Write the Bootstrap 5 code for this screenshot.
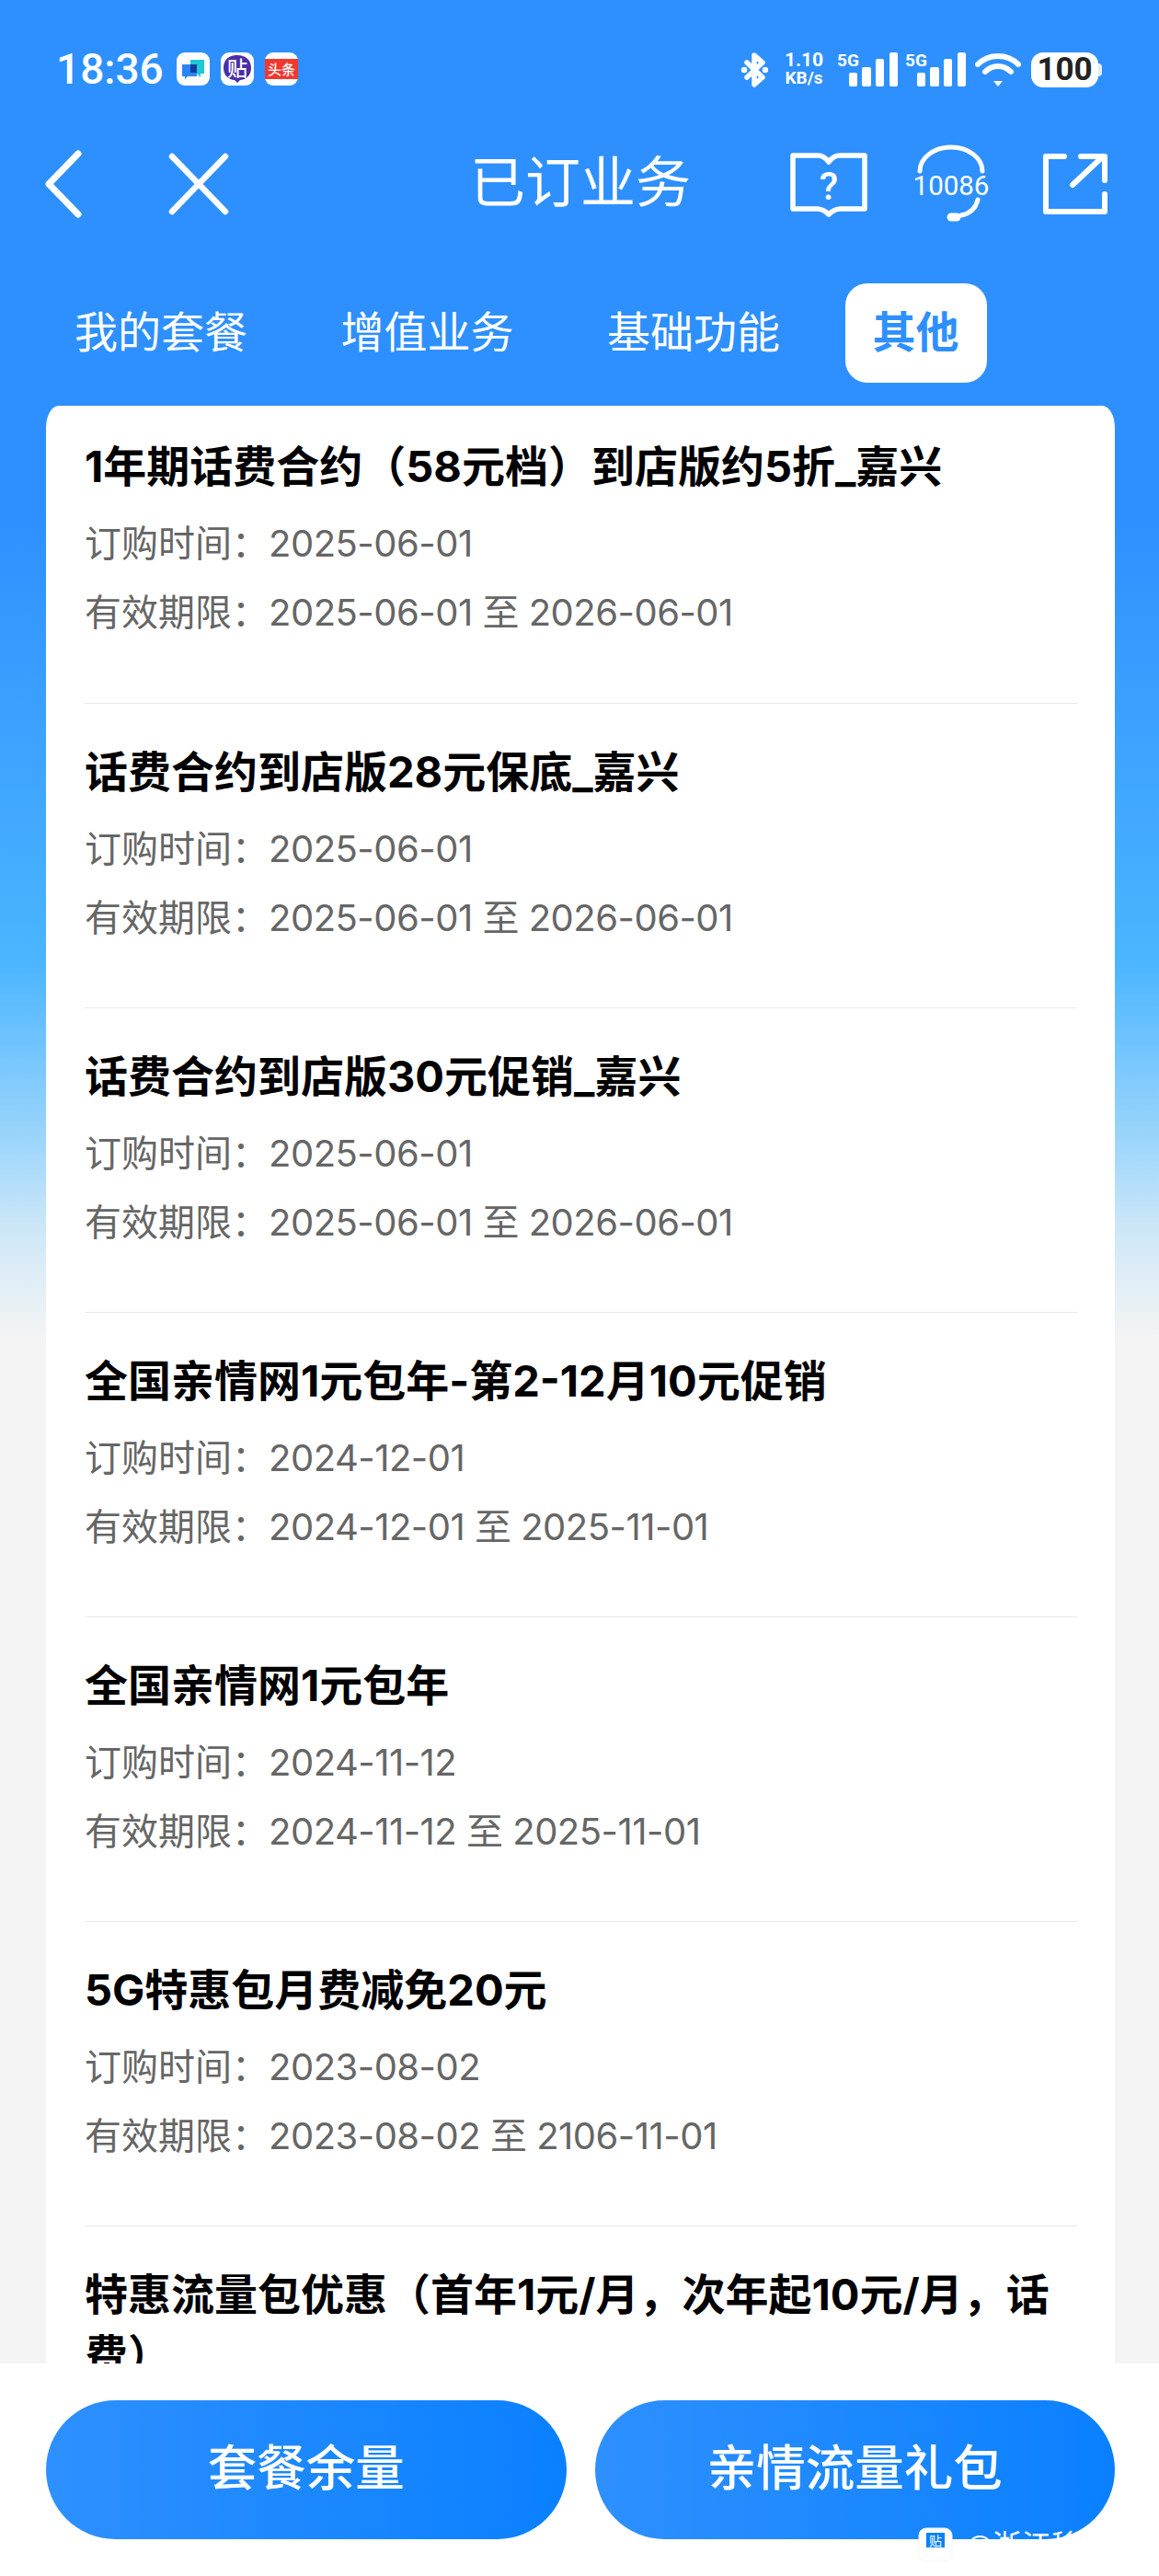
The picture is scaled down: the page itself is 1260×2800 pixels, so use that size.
<!DOCTYPE html>
<html lang="zh-CN">
<head>
  <meta charset="UTF-8" />
  <meta name="viewport" content="width=device-width, initial-scale=1" />
  <title>已订业务</title>
  <link href="https://cdn.jsdelivr.net/npm/bootstrap@5.3.0/dist/css/bootstrap.min.css" rel="stylesheet" />
  <style>
    html, body { height: 100%; margin: 0; }
    body { font-family: "Roboto", "Noto Sans CJK SC", sans-serif; background: #fff; }
    svg { display: block; flex: none; }
    svg text { font-family: "Roboto", "Noto Sans CJK SC", sans-serif; }
    .phone { height: 2800px; overflow: hidden; }
    .page-area {
      min-height: 0;
      overflow: hidden;
      background: linear-gradient(#2e90ff 0, #2e90ff 560px, #4bb5ff 1045px, #8fd0fc 1210px, #cfe8f8 1340px, #f4f4f4 1455px);
    }
    .status-row { padding: 56px 62px 0 61px; height: 145px; color: #fff; }
    .clock { font-size: 46px; font-weight: 500; line-height: 38px; width: 113px; margin-right: 18px; }
    .tile-row { gap: 12px; }
    .app-tile { width: 36px; height: 36px; border-radius: 9px; background: #fff; }
    .speed { width: 44px; margin: 0 14px 0 17px; font-weight: 700; text-align: center; }
    .speed-num { font-size: 21px; line-height: 19px; }
    .speed-unit { font-size: 19px; line-height: 20px; }
    .signal { height: 42px; margin-top: -4px; }
    .signal-two { margin-left: 8px; }
    .wifi { margin: 0 11px 0 10px; }
    .battery-body {
      width: 73px; height: 38px; border-radius: 13px; background: #fff; color: #222;
      font-size: 35px; font-weight: 700; line-height: 38px; text-align: center;
    }
    .battery-nub { width: 4px; height: 14px; border-radius: 0 4px 4px 0; background: #fff; opacity: .85; }
    .top-nav { height: 110px; padding: 0 47px 0 49px; display: grid; grid-template-columns: 1fr auto 1fr; }
    .close-icon { margin-left: 92px; }
    .nav-icons { gap: 53px; padding-right: 8px; }
    .headset-icon { margin-left: -6px; }
    .page-title { color: #fff; font-size: 60px; font-weight: 400; line-height: 80px; }
    .tab-row { margin-top: 53px; padding-left: 50px; gap: 39.5px; }
    .tab-row .nav-link {
      color: #fff; font-size: 47px; line-height: 108px; height: 108px; padding: 0 31px; border-radius: 24px; font-weight: 400;
    }
    .tab-row .nav-link.active { background: #fff; color: #2e90ff; font-weight: 700; padding: 0 30px; }
    .biz-card { margin: 25px 48px 0 50px; border: 0; border-radius: 14px 14px 0 0 / 24px 24px 0 0; padding: 0 41px 0 42px; }
    .biz-item { padding: 41px 0 60px; border-color: #e9e9e9; background: transparent; }
    .biz-item:first-child { padding: 33px 0 61px; }
    .biz-name { color: #000; font-family: "Inter", "Noto Sans CJK SC", sans-serif; font-size: 47px; font-weight: 700; line-height: 66px; margin-bottom: 13px; }
    .biz-meta { color: #666; font-family: "Inter", "Noto Sans CJK SC", sans-serif; font-size: 40px; line-height: 75px; font-weight: 400; }
    .biz-date { letter-spacing: -.5px; }
    .bottom-bar { height: 231px; padding: 40px 48px 40px 50px; gap: 31px; background: #fff; }
    .bar-btn {
      flex: 1 1 0; height: 151px; border: 0; border-radius: 76px; padding: 0;
      font-size: 53.5px; font-weight: 500; color: #fff;
      background: linear-gradient(90deg, #2e90ff, #0a80ff);
    }
    .bar-btn:hover, .bar-btn:active { color: #fff; background: linear-gradient(90deg, #2e90ff, #0a80ff); }
    .wm-mark { left: 998px; top: 178px; gap: 14px; color: #fff; font-size: 32px; line-height: 40px; }
  </style>
</head>
<body>
  <div class="phone d-flex flex-column">
    <div class="page-area flex-grow-1">

      <!-- status bar -->
      <div class="status-row d-flex justify-content-between align-items-start">
        <div class="d-flex align-items-center">
          <div class="clock text-nowrap">18:36</div>
          <div class="d-flex tile-row">
            <div class="app-tile">
              <svg width="36" height="36" viewBox="0 0 36 36">
                <path d="M15 8h15v15h-4v4l-4-4h-7z" fill="#1ec8d4"/>
                <path d="M6 13h16v13H12l-3 3v-3H6z" fill="#2a86f8"/>
                <rect x="15" y="13" width="7" height="9" fill="#0f3f9e"/>
              </svg>
            </div>
            <div class="app-tile">
              <svg width="36" height="36" viewBox="0 0 36 36">
                <path d="M18 3c9 0 15 5 15 14 0 8-6 13-12 13l-3 3-3-3C9 30 3 25 3 17 3 8 9 3 18 3z" fill="#4a2fa6"/>
                <text x="18" y="25" font-size="22" font-weight="500" fill="#fff" text-anchor="middle">贴</text>
              </svg>
            </div>
            <div class="app-tile">
              <svg width="36" height="36" viewBox="0 0 36 36">
                <rect x="0" y="7" width="36" height="22" fill="#f0382f"/>
                <text x="18" y="24" font-size="15" font-weight="500" fill="#fff" text-anchor="middle">头条</text>
              </svg>
            </div>
          </div>
        </div>
        <div class="d-flex align-items-center">
          <svg width="30" height="38" viewBox="0 0 30 38" fill="none" stroke="#fff" stroke-width="5.5" stroke-linecap="round" stroke-linejoin="round">
            <path d="M7 11l17 16-9 8V3l9 8L7 27"/>
            <circle cx="4" cy="19" r="2" fill="#fff" stroke-width="2.5"/>
            <circle cx="27" cy="19" r="2" fill="#fff" stroke-width="2.5"/>
          </svg>
          <div class="speed">
            <div class="speed-num">1.10</div>
            <div class="speed-unit">KB/s</div>
          </div>
          <svg class="signal" width="66" height="42" viewBox="0 -4 66 42" fill="#fff">
            <text x="0" y="15" font-size="19" font-weight="700">5G</text>
            <rect x="13" y="22" width="9" height="15" rx="2"/>
            <rect x="27" y="16" width="10" height="21" rx="2"/>
            <rect x="42" y="7" width="9" height="30" rx="2"/>
            <rect x="57" y="0" width="9" height="37" rx="2"/>
          </svg>
          <svg class="signal signal-two" width="66" height="42" viewBox="0 -4 66 42" fill="#fff">
            <text x="0" y="15" font-size="19" font-weight="700">5G</text>
            <rect x="13" y="22" width="9" height="15" rx="2"/>
            <rect x="27" y="16" width="10" height="21" rx="2"/>
            <rect x="42" y="7" width="9" height="30" rx="2"/>
            <rect x="57" y="0" width="9" height="37" rx="2"/>
          </svg>
          <svg class="wifi" width="50" height="38" viewBox="0 0 50 38" fill="none" stroke="#fff" stroke-width="6" stroke-linecap="round">
            <path d="M3 13C15 1 35 1 47 13"/>
            <path d="M11 21C19 13 31 13 39 21"/>
            <path d="M20 31h10l-5 6z" fill="#fff" stroke="none"/>
          </svg>
          <div class="d-flex align-items-center">
            <div class="battery-body">100</div>
            <div class="battery-nub"></div>
          </div>
        </div>
      </div>

      <!-- title bar -->
      <div class="top-nav align-items-center">
        <div class="d-flex align-items-center">
          <svg width="42" height="74" viewBox="0 0 42 74" fill="none" stroke="#fff" stroke-width="7" stroke-linecap="round" stroke-linejoin="round">
            <path d="M36 4L4 37l32 33"/>
          </svg>
          <svg class="close-icon" width="66" height="68" viewBox="0 0 66 68" fill="none" stroke="#fff" stroke-width="6.5" stroke-linecap="round">
            <path d="M4 4l58 60M62 4L4 64"/>
          </svg>
        </div>
        <div class="page-title">已订业务</div>
        <div class="d-flex align-items-center justify-content-end nav-icons">
          <svg width="84" height="72" viewBox="0 0 84 72" fill="none" stroke="#fff" stroke-width="5.5" stroke-linejoin="round">
            <path d="M3 5h27c6 0 9 3 12 7 3-4 6-7 12-7h27v58H55c-6 0-9 2-13 6-4-4-7-6-13-6H3z"/>
            <text x="42" y="53" font-size="42" font-weight="500" fill="#fff" stroke="none" text-anchor="middle">?</text>
          </svg>
          <svg class="headset-icon" width="90" height="86" viewBox="-6 0 90 86" fill="none" stroke="#fff" stroke-width="5" stroke-linecap="round">
            <path d="M4 29A34 26 0 0 1 72 29"/>
            <text x="38" y="55" font-size="29.5" font-weight="400" fill="#fff" stroke="none" text-anchor="middle">10086</text>
            <path d="M67 60c-2 9-8 15-18 17"/>
            <path d="M38 79h6" stroke-width="9"/>
          </svg>
          <svg width="72" height="72" viewBox="0 0 72 72" fill="none" stroke="#fff" stroke-width="6" stroke-linecap="round" stroke-linejoin="round">
            <path d="M24 6H4v60h64V47"/>
            <path d="M33 37L66 6"/>
            <path d="M42 6h26v26"/>
          </svg>
        </div>
      </div>

      <!-- tabs -->
      <ul class="nav nav-pills tab-row">
        <li class="nav-item"><a class="nav-link" href="#">我的套餐</a></li>
        <li class="nav-item"><a class="nav-link" href="#">增值业务</a></li>
        <li class="nav-item"><a class="nav-link" href="#">基础功能</a></li>
        <li class="nav-item"><a class="nav-link active" href="#">其他</a></li>
      </ul>

      <!-- list -->
      <div class="card biz-card">
        <ul class="list-group list-group-flush" id="bizList"></ul>
      </div>
    </div>

    <!-- bottom buttons -->
    <div class="bottom-bar d-flex position-relative flex-shrink-0">
      <button type="button" class="btn bar-btn">套餐余量</button>
      <button type="button" class="btn bar-btn">亲情流量礼包</button>
      <div class="wm-mark position-absolute d-flex align-items-start">
        <svg width="38" height="38" viewBox="0 0 38 38">
          <rect x="1" y="1" width="36" height="36" rx="8" fill="#fff" stroke="#f5f5f5"/>
          <path d="M9 6h20v16H9z" fill="#0a80ff"/>
          <text x="19" y="20" font-size="14" fill="#fff" text-anchor="middle">贴</text>
        </svg>
        <span class="text-nowrap">@浙江移</span>
      </div>
    </div>
  </div>

  <script src="https://cdn.jsdelivr.net/npm/bootstrap@5.3.0/dist/js/bootstrap.bundle.min.js"></script>
  <script>
    const items = [
      ['1年期话费合约（58元档）到店版约5折_嘉兴', '2025-06-01', '2025-06-01 至 2026-06-01'],
      ['话费合约到店版28元保底_嘉兴', '2025-06-01', '2025-06-01 至 2026-06-01'],
      ['话费合约到店版30元促销_嘉兴', '2025-06-01', '2025-06-01 至 2026-06-01'],
      ['全国亲情网1元包年-第2-12月10元促销', '2024-12-01', '2024-12-01 至 2025-11-01'],
      ['全国亲情网1元包年', '2024-11-12', '2024-11-12 至 2025-11-01'],
      ['5G特惠包月费减免20元', '2023-08-02', '2023-08-02 至 2106-11-01'],
      ['特惠流量包优惠（首年1元/月，次年起10元/月，话费）']
    ];
    document.getElementById('bizList').innerHTML = items.map(i => `
      <li class="list-group-item biz-item">
        <div class="biz-name">${i[0]}</div>
        ${i[1] ? `<div class="biz-meta">订购时间：<span class="biz-date">${i[1]}</span></div>
        <div class="biz-meta">有效期限：<span class="biz-date">${i[2]}</span></div>` : ''}
      </li>`).join('');
  </script>
</body>
</html>
